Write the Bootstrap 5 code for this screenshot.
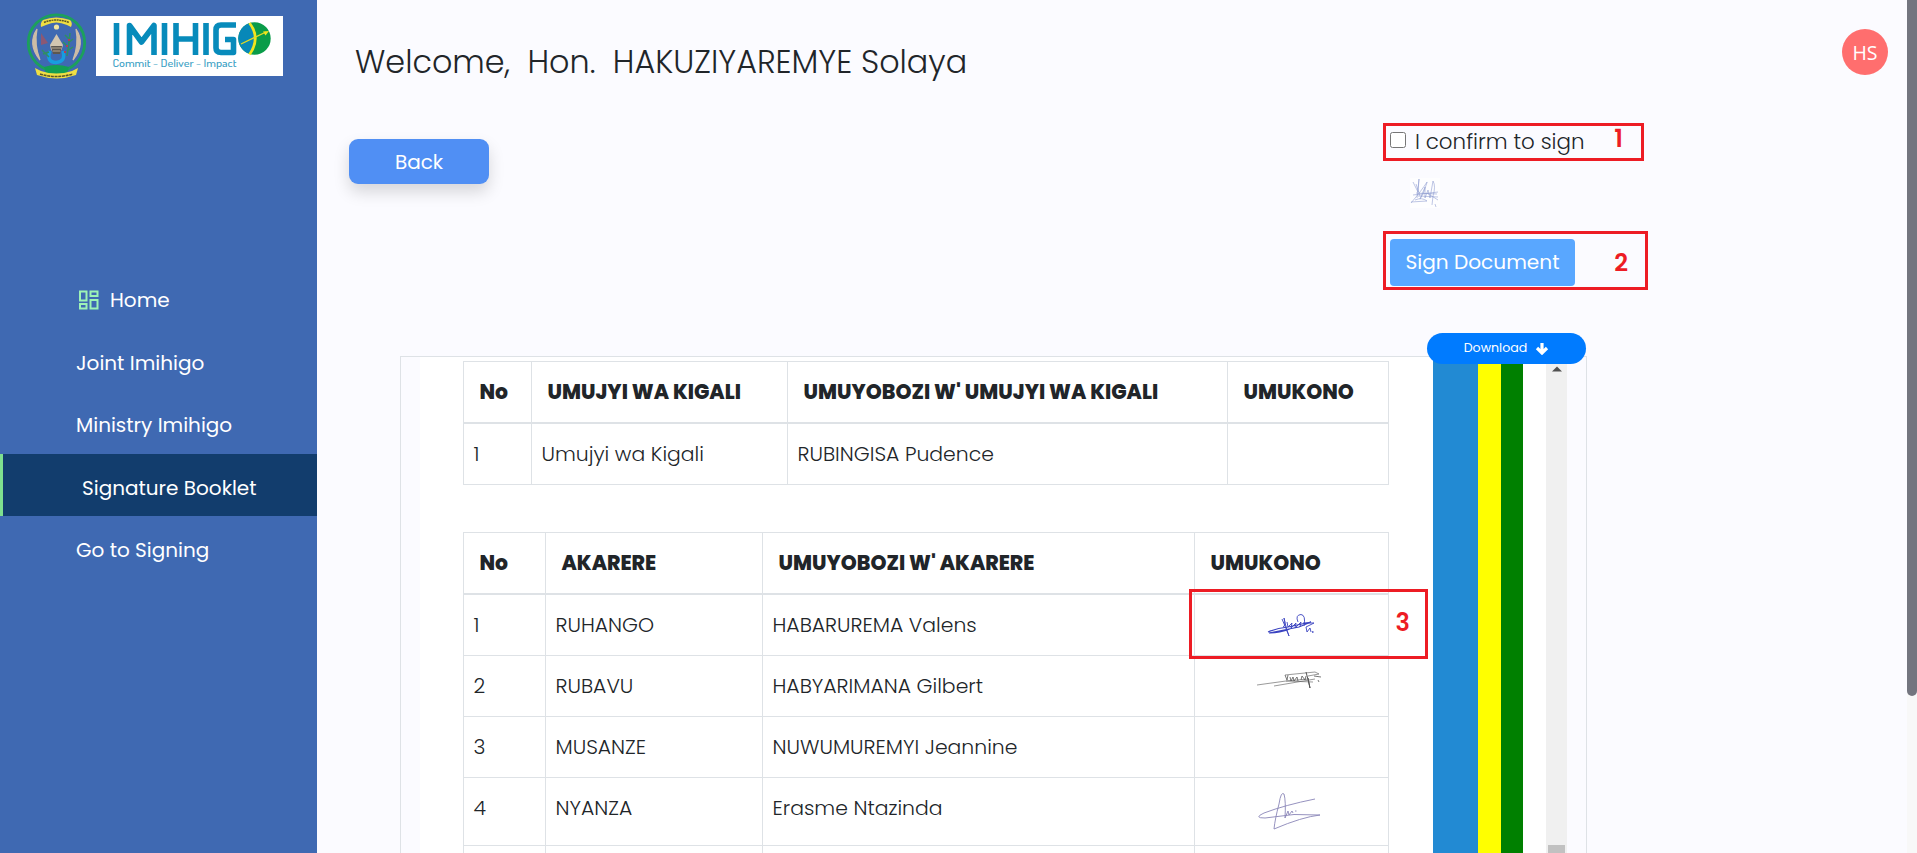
<!DOCTYPE html>
<html lang="en">
<head>
<meta charset="utf-8">
<meta name="viewport" content="width=device-width, initial-scale=1">
<title>Imihigo - Signature Booklet</title>
<link href="https://cdn.jsdelivr.net/npm/bootstrap@5.3.0/dist/css/bootstrap.min.css" rel="stylesheet">
<style>
body{font-family:Poppins,Inter,sans-serif;background:#fbfbff;color:#212529;font-size:20px;height:853px}
.sidebar{width:317px;background:#3f69b2}
.brand{height:269px;padding:13px 0 0 26px}
.emblem{width:61px;height:67px;margin-right:9px}
.wordmark{width:187px;height:60px;margin-top:3px}
.side-link{height:62.4px;line-height:63px;padding:0 0 0 76px;color:#fff;font-size:20px;border-radius:0}
.side-link:nth-child(3){line-height:65px}
.side-link svg{width:24px;height:24px;margin-right:10px}
.side-link.active{height:62px;margin:-2px 0 2.4px;background:#123d6d;border-left:3px solid #7ee08f;padding-left:79px;line-height:68px}
.welcome{font-size:31.8px;font-weight:300;line-height:48px;padding:38px 0 0 38px;white-space:pre}
.avatar{width:46px;height:46px;background:#ff6e6e;color:#fff;font:400 19.5px "Open Sans",sans-serif;margin:29px 19px 0 0}
.topbar{height:123px}
.tools{height:233px;padding-left:32px}
.btn-back{width:140px;height:45px;margin-top:16px;padding:0;background:#508ff4;color:#fff;border:0;border-radius:9px;font-size:20px;box-shadow:0 8px 16px rgba(0,0,0,.15)}
.sign-col{width:265px;margin-left:894px}
.callout{border:3px solid #ed1c24;color:#ed1c24}
.callout-n{color:#ed1c24;font-weight:600;font-size:24px;line-height:1}
.confirm{width:261px;height:38px;padding-left:4px;font-size:21.4px;font-weight:300;color:#212529}
.confirm .callout-n{margin:0 18px 6px auto}
.sign-box .callout-n{margin:12px 17px 0 auto}
.check{width:16px;height:16px;margin:0 9px 4px 0}
.my-sign{width:30px;height:30px;margin:17px 0 23px 27px}
.sign-box{height:59px;padding:5px 0 0 4px}
.btn-sign{width:185px;height:47px;background:#59a7ff;color:#fff;border:0;border-radius:4px;font-size:20.1px;padding:0 0 1px}
.frame{width:1187px;height:497px;margin-left:83px;padding:0 18px 0 19px;border:1px solid #dee2e6;border-bottom:0}
.sheet{width:1013px;height:496px;padding:4px 0 0 43px;background:#fff}
.btn-dl{width:159px;height:31px;right:0;top:-24px;background:#007bff;color:#fff;border-radius:16px;border:0;font-size:12.6px;padding:0}
.band-blue{width:45px;background:#228ad3}.band-yellow{width:23px;background:#ff0}.band-green{width:22px;background:green}
.gap-white{width:23px;background:#fff}
.inner-scroll{width:21px;background:#f0f0f0;padding-top:9px}
.inner-thumb{width:17px;height:8px;background:#c1c1c1}
.booklet{table-layout:fixed;width:926px;margin:0;border-color:#dee2e6;line-height:30px;color:#212529;--bs-table-bg:transparent}
.booklet>thead th{padding:15px 0 0 15.5px;font-weight:800;height:61px;font-size:20.35px;border:1px solid #dee2e6;border-bottom-width:2px;vertical-align:top;white-space:nowrap}
.booklet>tbody td{padding:15px 0 0 9.5px;height:61px;font-weight:300;font-size:20.4px;border:1px solid #dee2e6;vertical-align:top;white-space:nowrap}
.booklet>tbody>tr:first-child td{height:62px}
.booklet>tbody>tr.tall td{height:68px}
.booklet + .booklet{margin-top:47px}
.cell-3{left:-6px;top:-6px;width:239px;height:70px;padding:17px 15px 0 0;z-index:3}
.ink{left:62px;top:0;width:66px;height:60px}
.page-scroll{width:10px;background:#f8f8f8}
.page-thumb{height:696px;background:#73757f;border-radius:0 0 5px 5px}
</style>
</head>
<body class="d-flex overflow-hidden">
<nav class="sidebar nav flex-column flex-nowrap flex-shrink-0">
  <div class="brand d-flex align-items-start">
    <svg class="emblem" viewBox="0 0 61 67">
      <circle cx="30.500" cy="30" r="28.200" fill="none" stroke="#1ca05c" stroke-width="2.800"/>
      <path d="M11 16Q1 31 14 47Q8 32 11 16ZM50 16Q60 31 47 47Q53 32 50 16Z" fill="#cdbda6" stroke="#cdbda6" stroke-width="1.200"/>
      <path d="M15 14Q14 10 17 7Q30 2 44 7Q47 10 45 14L41 12Q30 7 20 12Z" fill="#efdf43"/>
      <path d="M18 9.500Q30 4.500 43 9.500" fill="none" stroke="#5a5728" stroke-width="1.500" stroke-dasharray="2 .6"/>
      <circle cx="30.500" cy="14" r="2.600" fill="#f0e5a0"/>
      <path d="M15 20L22 30L15 32Z" fill="#8b5874"/>
      <path d="M24 38Q20 49 30 49.500Q40 49 37 38" fill="none" stroke="#179de0" stroke-width="3.500"/>
      <path d="M30.500 21L37 32Q35 41 30 41Q25 40 24 32Z" fill="#d3c6b0"/>
      <path d="M25 33H36L34 41H27Z" fill="#5d574f"/><path d="M26 35H35M27 38H34" stroke="#b9aa92" stroke-width="1"/>
      <path d="M41 43Q43 31 44 20M42 34L37 29M42 30L47 26M41 38L47 34M43 26L39 22M16 37L23 44M17 41L23 39" stroke="#2f8f62" stroke-width="1.500" fill="none"/>
      <path d="M40 33h2M38 39h2M42 27h2" stroke="#b33f57" stroke-width="2"/>
      <path d="M18 54Q30 50 43 54L41 60Q30 62 20 60Z" fill="#129f54"/>
      <path d="M9 55L15 58Q30 63 46 58L52 55L50 62Q31 69 11 62Z" fill="#efdf43"/>
      <path d="M14 61Q30 66 47 61" fill="none" stroke="#5a5728" stroke-width="1.600" stroke-dasharray="3 .7"/>
    </svg>
    <svg class="wordmark" viewBox="0 0 187 60">
      <rect width="187" height="60" fill="#fff"/>
      <g fill="none" stroke="#078bbb" stroke-width="5.600" stroke-linejoin="round">
        <path d="M20.500 7V39M33.500 39V9.500L45.500 26L58 9.500V39M68.500 7V39M80 7V39M80 23H99.500M99.500 7V39M110 7V39M140 9H125Q120 9 120 14V32Q120 36.500 125 36.500H137.500V23.500H129"/>
      </g>
      <circle cx="158.500" cy="22.500" r="16.200" fill="#0a9c49"/>
      <path d="M155 6.700A16.200 16.200 0 0 0 154 38.100Q165 22 155 6.700Z" fill="#0788b8"/>
      <path d="M153.500 7Q165 22 153.500 38.500" fill="none" stroke="#f0e51d" stroke-width="2.800"/>
      <path d="M145 28L170 16" stroke="#e6dc22" stroke-width="1.300"/><path d="M173 15L167 15.500L169.500 19.500Z" fill="#f0e51d"/>
      <text x="16.500" y="50.500" font-family="Dosis,Inter,sans-serif" font-size="11" font-weight="500" fill="#3b9fc4" textLength="124" lengthAdjust="spacingAndGlyphs">Commit - Deliver - Impact</text>
    </svg>
  </div>
  <a class="side-link nav-link d-flex align-items-center" href="#"><svg viewBox="0 0 24 24" fill="#9df3b6"><path d="M3 2.500h8.500v11H3zM5 4.500v7h4.500v-7zM13.500 2.500h9v6.500h-9zM15.500 4.500v2.500h5v-2.500zM13.500 11h9v10.500h-9zM15.500 13v6.500h5v-6.500zM3 15h8.500v6.500H3zM5 17v2.500h4.500v-2.500z" fill-rule="evenodd"/></svg>Home</a>
  <a class="side-link nav-link" href="#">Joint Imihigo</a>
  <a class="side-link nav-link" href="#">Ministry Imihigo</a>
  <a class="side-link nav-link active" href="#">Signature Booklet</a>
  <a class="side-link nav-link" href="#">Go to Signing</a>
</nav>
<main class="flex-grow-1">
  <header class="topbar d-flex justify-content-between align-items-start">
    <h1 class="welcome m-0">Welcome,  Hon.  HAKUZIYAREMYE Solaya</h1>
    <div class="avatar rounded-circle d-flex align-items-center justify-content-center">HS</div>
  </header>
  <section class="tools d-flex align-items-start">
    <button class="btn btn-back">Back</button>
    <div class="sign-col">
      <label class="callout confirm d-flex align-items-center"><input class="check" type="checkbox">I confirm to sign<span class="callout-n">1</span></label>
      <svg class="my-sign d-block" viewBox="0 0 30 30"><rect width="30" height="30" fill="#fefeff"/><path d="M3 4L8 14L9 1L7 20M1 25Q12 12 17 4Q18 2 13 16L10 21L15 9V20L18 12L20 20L23 3Q26 8 23 18L22 27M3 17L28 14M8 18L28 19M1 24L17 23Q12 19 5 22M17 15L28 22M6 6L10 18M25 26L26 29M6 15L27 16" fill="none" stroke="#8b98cf" stroke-width=".8" opacity=".7"/></svg>
      <div class="callout sign-box d-flex align-items-start"><button class="btn btn-sign">Sign Document</button><span class="callout-n">2</span></div>
    </div>
  </section>
  <section class="frame d-flex position-relative">
    <div class="sheet overflow-hidden">
      <table class="table booklet">
        <colgroup><col style="width:68px"><col style="width:256px"><col style="width:440px"><col></colgroup>
        <thead><tr><th>No</th><th>UMUJYI WA KIGALI</th><th>UMUYOBOZI W' UMUJYI WA KIGALI</th><th>UMUKONO</th></tr></thead>
        <tbody><tr><td>1</td><td>Umujyi wa Kigali</td><td>RUBINGISA Pudence</td><td></td></tr></tbody>
      </table>
      <table class="table booklet">
        <colgroup><col style="width:82px"><col style="width:217px"><col style="width:432px"><col></colgroup>
        <thead><tr><th>No</th><th>AKARERE</th><th>UMUYOBOZI W' AKARERE</th><th>UMUKONO</th></tr></thead>
        <tbody>
          <tr><td>1</td><td>RUHANGO</td><td>HABARUREMA Valens</td><td class="position-relative">
            <svg class="ink position-absolute" viewBox="0 0 66 60" fill="none" stroke="#3a43c0"><path d="M11 37Q20 33 31 32L54 27L42 32L12 38Q22 38 33 34" stroke-width="1.100"/><path d="M25 24L31 38L32 41L30 36L27 23Q29 31 26 32M30 27L31 32L35 28L34 33L39 28L38 33L44 27L43 32M41 27Q38 20 44 19.500Q49 20 47 31M46 28L57 28L49 32L50 37L53 33L54 37" stroke-width=".9"/><path d="M55 37h1.500" stroke-width="1.500"/></svg>
            <div class="cell-3 callout position-absolute text-end"><span class="callout-n">3</span></div></td></tr>
          <tr><td>2</td><td>RUBAVU</td><td>HABYARIMANA Gilbert</td><td class="position-relative">
            <svg class="ink position-absolute" viewBox="0 0 66 60" fill="none" stroke="#555"><path d="M0 29L29 25L56 26M17 30L58 23M28 19L58 16L62 18L51 20M29 25L52 23" stroke-width=".6"/><path d="M28 19L30 24L31 19M33 21L34 25L36 21L37 25L40 21L41 25M44 24L45 20L48 24L49 20" stroke-width=".8"/><path d="M49 16Q51 23 53 32L51 22" stroke-width="1"/><path d="M57 20L64 21M61 24L62 26" stroke-width=".8"/></svg></td></tr>
          <tr><td>3</td><td>MUSANZE</td><td>NUWUMUREMYI Jeannine</td><td></td></tr>
          <tr class="tall"><td>4</td><td>NYANZA</td><td>Erasme Ntazinda</td><td class="position-relative">
            <svg class="ink position-absolute" viewBox="0 0 66 60" fill="none" stroke="#8a86b8" stroke-width=".9"><path d="M58 21Q28 27 7 35Q-4 40 8 40L37 36.500L63 37Q45 39 17 51Q18 41 22 26Q24 13 27 16Q29 23 28 40L31 33L32 37L35 33L36 35M38 33h1.500"/></svg></td></tr>
          <tr><td></td><td></td><td></td><td></td></tr>
        </tbody>
      </table>
    </div>
    <div class="band-blue"></div><div class="band-yellow"></div><div class="band-green"></div><div class="gap-white"></div>
    <div class="inner-scroll d-flex flex-column align-items-center justify-content-between"><svg width="10" height="6" viewBox="0 0 10 6"><path d="M0 5.500L5 .5L10 5.500Z" fill="#505050"/></svg><div class="inner-thumb"></div></div>
    <button class="btn btn-dl position-absolute d-flex align-items-center justify-content-center">Download<svg class="ms-2" width="14" height="12" viewBox="0 0 14 12"><path d="M7 0V9M2 5L7 10L12 5" fill="none" stroke="#fff" stroke-width="3.200"/></svg></button>
  </section>
</main>
<div class="page-scroll flex-shrink-0"><div class="page-thumb"></div></div>
<script src="https://cdn.jsdelivr.net/npm/bootstrap@5.3.0/dist/js/bootstrap.bundle.min.js"></script>
</body>
</html>
